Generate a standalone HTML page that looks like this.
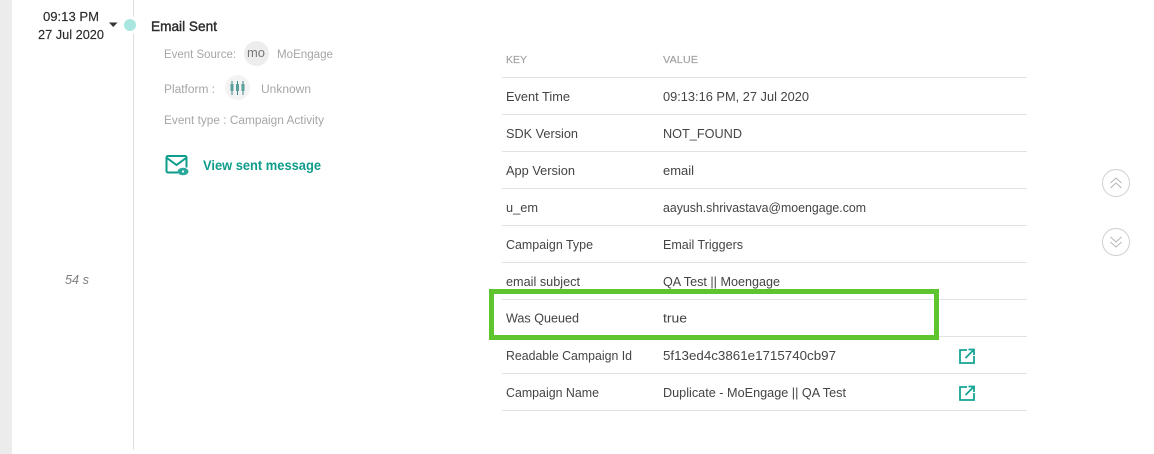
<!DOCTYPE html>
<html><head><meta charset="utf-8">
<style>
html,body{margin:0;padding:0;background:#fff;width:1154px;height:454px;overflow:hidden}
svg{display:block}
text{font-family:"Liberation Sans",sans-serif;font-size:12.500px;fill:#444}
.g{fill:#a6a6a6;font-size:11.500px}
.d{fill:#2b2b2b;font-size:13px;stroke:#2b2b2b;stroke-width:.15}
.l{stroke:#e2e2e2;stroke-width:1}
.h{fill:#a0a0a0;font-size:10.500px;stroke:#a0a0a0;stroke-width:.15}
</style></head><body>
<svg width="1154" height="454" viewBox="0 0 1154 454" xmlns="http://www.w3.org/2000/svg">
<rect x="0" y="0" width="12" height="454" fill="#ececec"/>
<rect x="133" y="0" width="1" height="450" fill="#dedede"/>
<circle cx="130" cy="25" r="9" fill="#fff"/>
<circle cx="130" cy="25" r="6" fill="#a9e6df"/>
<path d="M109 22.500h8.500l-4.250 4.500z" fill="#333"/>

<text class="d" x="43" y="21" textLength="56" lengthAdjust="spacingAndGlyphs">09:13 PM</text>
<text class="d" x="38" y="39" textLength="66" lengthAdjust="spacingAndGlyphs">27 Jul 2020</text>
<text x="65" y="284" textLength="24" lengthAdjust="spacingAndGlyphs" style="font-style:italic;fill:#808080;font-size:13px">54 s</text>

<text x="151" y="31" textLength="66" lengthAdjust="spacingAndGlyphs" style="font-size:14px;fill:#2b2b2b;stroke:#2b2b2b;stroke-width:.4">Email Sent</text>
<text class="g" x="164" y="58" textLength="72" lengthAdjust="spacingAndGlyphs">Event Source:</text>
<circle cx="256.500" cy="53.500" r="12.500" fill="#ededed"/>
<text x="247" y="57" textLength="18" lengthAdjust="spacingAndGlyphs" style="font-size:13px;fill:#777">mo</text>
<text class="g" x="277" y="58" textLength="56" lengthAdjust="spacingAndGlyphs">MoEngage</text>
<text class="g" x="164" y="93" textLength="51" lengthAdjust="spacingAndGlyphs">Platform :</text>
<circle cx="237.500" cy="87.500" r="12.500" fill="#f3f3f3"/>
<g stroke="#3f8a85" stroke-width="1" fill="none">
<path d="M232 81v14M237.500 81v14M243 81v14"/>
</g>
<g fill="#5c9f9a">
<rect x="230.500" y="84" width="3" height="7"/>
<rect x="236" y="84" width="3" height="7"/>
<rect x="241.500" y="84" width="3" height="7"/>
</g>
<text class="g" x="261" y="93" textLength="50" lengthAdjust="spacingAndGlyphs">Unknown</text>
<text class="g" x="164" y="124" textLength="160" lengthAdjust="spacingAndGlyphs">Event type : Campaign Activity</text>

<g fill="none" stroke="#0e9d8b" stroke-width="2">
<path d="M178 172.500h-10a1.500 1.500 0 0 1-1.500-1.500v-13.500a1.500 1.500 0 0 1 1.500-1.500h17a1.500 1.500 0 0 1 1.500 1.500v10"/>
<path d="M167 158l9.500 7 9.500-7"/>
</g>
<ellipse cx="183" cy="171.500" rx="5.500" ry="3.800" fill="#2aa89a"/>
<circle cx="183" cy="171.500" r="1.100" fill="#fff"/>
<text x="203" y="170" textLength="118" lengthAdjust="spacingAndGlyphs" style="font-size:14px;font-weight:bold;fill:#0e9d8b">View sent message</text>

<text class="h" x="506" y="63" textLength="21" lengthAdjust="spacingAndGlyphs">KEY</text>
<text class="h" x="663" y="63" textLength="35" lengthAdjust="spacingAndGlyphs">VALUE</text>

<path class="l" d="M502 77.500H1027M502 114.500H1027M502 151.500H1027M502 188.500H1027M502 225.500H1027M502 262.500H1027M502 299.500H1027M502 336.500H1027M502 373.500H1027M502 410.500H1027"/>

<text x="506" y="101" textLength="64" lengthAdjust="spacingAndGlyphs">Event Time</text>
<text x="663" y="101" textLength="146" lengthAdjust="spacingAndGlyphs">09:13:16 PM, 27 Jul 2020</text>
<text x="506" y="138" textLength="72" lengthAdjust="spacingAndGlyphs">SDK Version</text>
<text x="663" y="138" textLength="79" lengthAdjust="spacingAndGlyphs">NOT_FOUND</text>
<text x="506" y="175" textLength="69" lengthAdjust="spacingAndGlyphs">App Version</text>
<text x="663" y="175" textLength="31" lengthAdjust="spacingAndGlyphs">email</text>
<text x="506" y="212" textLength="32" lengthAdjust="spacingAndGlyphs">u_em</text>
<text x="663" y="212" textLength="203" lengthAdjust="spacingAndGlyphs">aayush.shrivastava@moengage.com</text>
<text x="506" y="249" textLength="87" lengthAdjust="spacingAndGlyphs">Campaign Type</text>
<text x="663" y="249" textLength="80" lengthAdjust="spacingAndGlyphs">Email Triggers</text>
<text x="506" y="286" textLength="74" lengthAdjust="spacingAndGlyphs">email subject</text>
<text x="663" y="286" textLength="117" lengthAdjust="spacingAndGlyphs">QA Test || Moengage</text>
<text x="506" y="322.500" textLength="73" lengthAdjust="spacingAndGlyphs">Was Queued</text>
<text x="663" y="322.500" textLength="24" lengthAdjust="spacingAndGlyphs">true</text>
<text x="506" y="360" textLength="126" lengthAdjust="spacingAndGlyphs">Readable Campaign Id</text>
<text x="663" y="360" textLength="173" lengthAdjust="spacingAndGlyphs">5f13ed4c3861e1715740cb97</text>
<text x="506" y="397" textLength="93" lengthAdjust="spacingAndGlyphs">Campaign Name</text>
<text x="663" y="397" textLength="183" lengthAdjust="spacingAndGlyphs">Duplicate - MoEngage || QA Test</text>

<rect x="491.500" y="291.500" width="445" height="46" fill="none" stroke="#5fc52e" stroke-width="5"/>

<g fill="none" stroke="#14a594" stroke-width="1.800">
<path d="M967 350h-7v13h14v-7"/>
<path d="M965.500 358l8-8M968.500 349.500h5.500v5.500"/>
<path d="M967 387h-7v13h14v-7"/>
<path d="M965.500 395l8-8M968.500 386.500h5.500v5.500"/>
</g>

<g fill="none" stroke="#cfcfcf" stroke-width="1">
<circle cx="1116" cy="183" r="13.500"/>
<circle cx="1116" cy="242" r="13.500"/>
<path d="M1110.500 183l5.500-5 5.500 5M1110.500 188l5.500-5 5.500 5" stroke="#b5b5b5"/>
<path d="M1110.500 237l5.500 5 5.500-5M1110.500 242l5.500 5 5.500-5" stroke="#b5b5b5"/>
</g>
</svg>
</body></html>
